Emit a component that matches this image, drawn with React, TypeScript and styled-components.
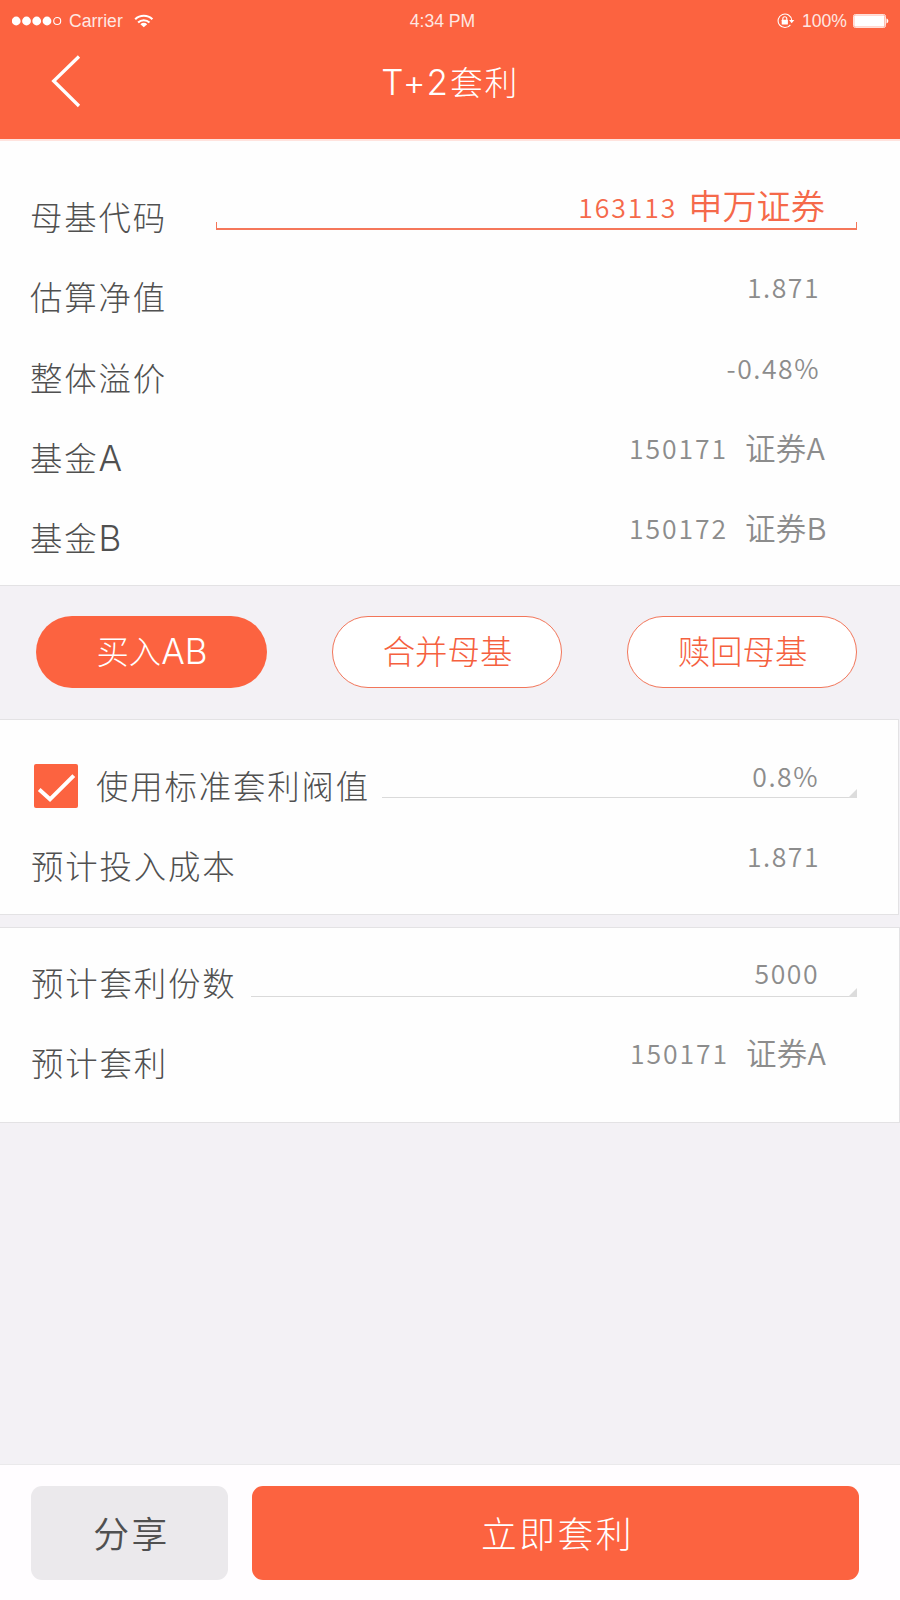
import React from 'react';
import styled, { createGlobalStyle, css } from 'styled-components';

const ORANGE = '#fc6340';
const INK = '#505050';
const MUTED = '#8c8c8c';
const LINE = '#e3e2e4';
const CJK = '"Noto Sans CJK SC", sans-serif';

const GlobalStyle = createGlobalStyle`
  * { box-sizing: border-box; }
  body { margin: 0; background: #f3f1f5; }
  button { font: inherit; border: 0; padding: 0; margin: 0; cursor: pointer; }
`;

const Screen = styled.div`
  width: 900px;
  height: 1600px;
  display: flex;
  flex-direction: column;
  overflow: hidden;
  background: #f3f1f5;
  color: ${INK};
  font-family: ${CJK};
  font-weight: 300;
`;

const Header = styled.header`
  height: 141px;
  flex: none;
  display: flex;
  flex-direction: column;
  background: ${ORANGE};
  border-bottom: 2px solid #ffe3de;
  color: #fff;
`;

const StatusBar = styled.div`
  height: 41px;
  padding: 0 11px 0 12px;
  display: grid;
  grid-template-columns: 1fr auto 1fr;
  align-items: center;
  font: 400 17.6px/41px "Liberation Sans", Arial, sans-serif;
`;

const StatusGroup = styled.div<{ $end?: boolean }>`
  display: flex;
  align-items: center;
  justify-content: ${(p) => (p.$end ? 'flex-end' : 'flex-start')};
`;

const StatusText = styled.span<{ $left?: number; $right?: number }>`
  margin-left: ${(p) => p.$left ?? 0}px;
  margin-right: ${(p) => p.$right ?? 0}px;
  padding-top: 1px;
  opacity: 0.85;
`;

const NavBar = styled.div`
  height: 98px;
  padding-left: 50px;
  display: grid;
  grid-template-columns: 1fr auto 1fr;
  align-items: start;
`;

const BackButton = styled.button`
  width: 34px;
  height: 56px;
  margin-top: 12px;
  background: none;
`;

const Title = styled.h1`
  margin: 0 50px 0 0;
  font-size: 32.8px;
  font-weight: 300;
  line-height: 80px;
  letter-spacing: 1.6px;
`;

const Latin = styled.span<{ $spacing?: number }>`
  font-family: Inter, sans-serif;
  font-size: 35px;
  letter-spacing: ${(p) => p.$spacing ?? 0}px;
`;

const Panel = styled.section<{ $top: number; $height: number; $edge?: number }>`
  height: ${(p) => p.$height}px;
  flex: none;
  margin-right: ${(p) => (p.$edge ? p.$edge - 1 : 0)}px;
  padding: ${(p) => p.$top}px 0 0 30px;
  background: #fefefe;
  border-bottom: 1px solid ${LINE};
  ${(p) =>
    p.$edge &&
    css`
      border-top: 1px solid ${LINE};
      border-right: 1px solid ${LINE};
    `}
`;

const Row = styled.div`
  height: 80.25px;
  display: flex;
  align-items: flex-start;
  justify-content: space-between;
`;

const Label = styled.span<{ $indent?: number }>`
  flex: none;
  margin-left: ${(p) => p.$indent ?? 0}px;
  font-size: 32.4px;
  line-height: 80px;
  letter-spacing: 1.85px;
  white-space: nowrap;
`;

const Value = styled.div<{ $right?: number }>`
  padding-right: ${(p) => p.$right ?? 80}px;
  display: flex;
  align-items: flex-start;
  color: ${MUTED};
  font-size: 26.6px;
  font-weight: 350;
  line-height: 61px;
  letter-spacing: 1.5px;
`;

const Code = styled.span`
  letter-spacing: 1.9px;
`;

const FundName = styled.span`
  width: 82px;
  margin-left: 17px;
  font-size: 30.5px;
  letter-spacing: 0.2px;
  white-space: nowrap;
`;

const Field = styled.div<{ $width: number; $active?: boolean; $height: number; $right: number }>`
  position: relative;
  width: ${(p) => p.$width}px;
  height: ${(p) => p.$height}px;
  margin-right: ${(p) => p.$right}px;
  padding-right: ${(p) => (p.$active ? 32 : 38)}px;
  display: flex;
  justify-content: flex-end;
  align-items: flex-start;
  border-bottom: ${(p) => (p.$active ? '2px solid #f5775a' : '1px solid #dadada')};
  color: ${(p) => (p.$active ? '#f5694a' : MUTED)};
  font-size: 26.6px;
  font-weight: 350;
  line-height: 61px;
  letter-spacing: 1.5px;
  ${(p) =>
    p.$active
      ? css`
          &::before,
          &::after {
            content: '';
            position: absolute;
            bottom: -1px;
            width: 1px;
            height: 7px;
            background: #f5775a;
          }
          &::before { left: 0; }
          &::after { right: 0; }
        `
      : css`
          &::after {
            content: '';
            position: absolute;
            right: 0;
            bottom: -1px;
            width: 9px;
            height: 9px;
            background: #dcdcdc;
            clip-path: polygon(100% 0, 100% 100%, 0 100%);
          }
        `}
`;

const ActiveName = styled.span`
  margin-left: 11px;
  font-size: 34.2px;
  line-height: 56px;
  letter-spacing: 0;
`;

const CheckBox = styled.span`
  flex: none;
  width: 44px;
  height: 44px;
  margin: 19px 0 0 4px;
  display: block;
  border-radius: 2px;
  background: ${ORANGE};
`;

const CheckGroup = styled.label`
  display: flex;
`;

const Steps = styled.nav`
  height: 133px;
  flex: none;
  padding: 30px 43px 0 36px;
  display: flex;
  justify-content: space-between;
`;

const Pill = styled.button<{ $active?: boolean }>`
  width: ${(p) => (p.$active ? 231 : 230)}px;
  height: 72px;
  padding: 0 0 4px 1px;
  border-radius: 36px;
  border: ${(p) => (p.$active ? '0' : '1.5px solid #f2765a')};
  background: ${(p) => (p.$active ? ORANGE : '#fff')};
  color: ${(p) => (p.$active ? '#fff' : '#f5603e')};
  font-size: 32.4px;
  line-height: 66px;
  white-space: nowrap;
`;

const Gap = styled.div`
  height: 12px;
  flex: none;
`;

const Footer = styled.footer`
  height: 136px;
  flex: none;
  margin-top: auto;
  padding: 21px 41px 0 31px;
  display: flex;
  gap: 24px;
  border-top: 1px solid #eae9eb;
  background: #fffdff;
`;

const Action = styled.button<{ $primary?: boolean }>`
  flex: ${(p) => (p.$primary ? '1' : '0 0 197px')};
  height: 94px;
  padding: 0 0 3px 4px;
  border-radius: 11px;
  background: ${(p) => (p.$primary ? ORANGE : '#ebe9ec')};
  color: ${(p) => (p.$primary ? '#fff' : INK)};
  font-size: 35.8px;
  font-weight: ${(p) => (p.$primary ? 300 : 350)};
  letter-spacing: 2.4px;
`;

const Signal = () => (
  <svg width="50" height="10" viewBox="0 0 50 10">
    {[4.2, 14.5, 24.7, 35].map((x) => (
      <circle key={x} cx={x} cy="5" r="4.4" fill="#fff" />
    ))}
    <circle cx="45.2" cy="5" r="3.5" fill="none" stroke="#fff" strokeWidth="1.1" />
  </svg>
);

const Wifi = () => (
  <svg width="20" height="14" viewBox="0 0 20 14" fill="none" stroke="#fff" strokeWidth="2.1">
    <path d="M1.2 5.2a12.4 12.4 0 0 1 17.2 0" />
    <path d="M4.1 8.5a8.2 8.2 0 0 1 11.4 0" />
    <path d="M9.8 13.2 6.4 10.2a4.8 4.8 0 0 1 6.8 0z" fill="#fff" stroke="none" />
  </svg>
);

const RotationLock = () => (
  <svg width="18" height="16" viewBox="0 0 18 16" fill="none" stroke="#fff">
    <path d="M13.4 11.8A6.8 6.8 0 1 1 14.7 7.2" strokeWidth="1.1" />
    <path d="M12.1 7h5.2l-2.6 3.2z" fill="#fff" stroke="none" />
    <path d="M5.8 7V5.7a2 2 0 0 1 4 0V7" strokeWidth="1.1" />
    <rect x="4.7" y="6.8" width="6.2" height="4.6" rx="0.5" fill="#fff" stroke="none" />
  </svg>
);

const Battery = () => (
  <svg width="36" height="14" viewBox="0 0 36 14">
    <rect x="0.5" y="0.5" width="32" height="13" rx="1.8" fill="none" stroke="#fff" strokeOpacity="0.8" />
    <rect x="1.2" y="1.2" width="30.4" height="11.6" rx="1" fill="#fff" />
    <path d="M33.5 4.6c2.4.6 2.4 4.2 0 4.8z" fill="#fff" />
  </svg>
);

export default function App() {
  return (
    <>
      <GlobalStyle />
      <Screen>
        <Header>
          <StatusBar>
            <StatusGroup>
              <Signal />
              <StatusText $left={7} $right={11}>Carrier</StatusText>
              <Wifi />
            </StatusGroup>
            <StatusText $right={16}>4:34 PM</StatusText>
            <StatusGroup $end>
              <RotationLock />
              <StatusText $left={7} $right={6}>100%</StatusText>
              <Battery />
            </StatusGroup>
          </StatusBar>
          <NavBar>
            <BackButton aria-label="返回">
              <svg width="34" height="56" viewBox="0 0 34 56" fill="none" stroke="#fff" strokeWidth="3.3">
                <path d="M29 3.5 3.7 28 29 53" />
              </svg>
            </BackButton>
            <Title>
              <Latin $spacing={2}>T+2</Latin>套利
            </Title>
          </NavBar>
        </Header>

        <Panel $top={35} $height={445}>
          <Row>
            <Label>母基代码</Label>
            <Field $width={641} $height={54} $right={43} $active>
              <Code>163113</Code>
              <ActiveName>申万证券</ActiveName>
            </Field>
          </Row>
          <Row>
            <Label>估算净值</Label>
            <Value>1.871</Value>
          </Row>
          <Row>
            <Label>整体溢价</Label>
            <Value>-0.48%</Value>
          </Row>
          <Row>
            <Label>基金<Latin>A</Latin></Label>
            <Value $right={73}><Code>150171</Code><FundName>证券A</FundName></Value>
          </Row>
          <Row>
            <Label>基金<Latin>B</Latin></Label>
            <Value $right={73}><Code>150172</Code><FundName>证券B</FundName></Value>
          </Row>
        </Panel>

        <Steps>
          <Pill $active>买入<Latin>AB</Latin></Pill>
          <Pill>合并母基</Pill>
          <Pill>赎回母基</Pill>
        </Steps>

        <Panel $top={25} $height={196} $edge={2}>
          <Row>
            <CheckGroup>
              <CheckBox>
                <svg width="44" height="44" viewBox="0 0 44 44" fill="none" stroke="#fff" strokeWidth="4">
                  <path d="M5.2 25.5 16 35.3 39.8 11.6" />
                </svg>
              </CheckBox>
              <Label $indent={18}>使用标准套利阀值</Label>
            </CheckGroup>
            <Field $width={475} $height={53} $right={41}>0.8%</Field>
          </Row>
          <Row>
            <Label $indent={1}>预计投入成本</Label>
            <Value $right={78}>1.871</Value>
          </Row>
        </Panel>

        <Gap />

        <Panel $top={14} $height={196} $edge={1}>
          <Row>
            <Label $indent={1}>预计套利份数</Label>
            <Field $width={606} $height={55} $right={42}>5000</Field>
          </Row>
          <Row>
            <Label $indent={1}>预计套利</Label>
            <Value $right={71}><Code>150171</Code><FundName>证券A</FundName></Value>
          </Row>
        </Panel>

        <Footer>
          <Action>分享</Action>
          <Action $primary>立即套利</Action>
        </Footer>
      </Screen>
    </>
  );
}
